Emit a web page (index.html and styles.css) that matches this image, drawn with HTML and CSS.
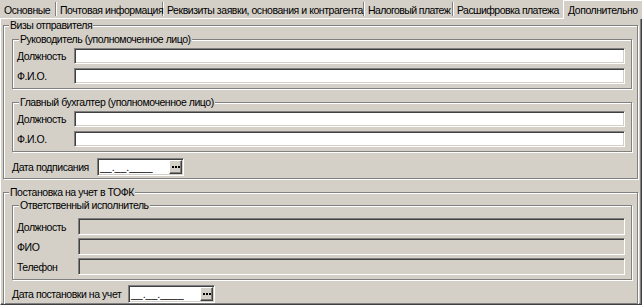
FILE: index.html
```html
<!DOCTYPE html>
<html lang="ru">
<head>
<meta charset="utf-8">
<title>Дополнительно</title>
<link rel="stylesheet" href="styles.css">
</head>
<body>
<div class="window">
  <div class="tabs">
    <div class="tab tab-main">Основные</div>
    <div class="tab tab-mail">Почтовая информация</div>
    <div class="tab tab-req">Реквизиты заявки, основания и контрагента</div>
    <div class="tab tab-tax">Налоговый платеж</div>
    <div class="tab tab-detail">Расшифровка платежа</div>
    <div class="tab tab-active">Дополнительно</div>
  </div>
  <div class="panel">
    <fieldset class="group outer outer-1">
      <legend class="outer-legend">Визы отправителя</legend>
      <fieldset class="group inner inner-1">
        <legend class="inner-legend">Руководитель (уполномоченное лицо)</legend>
        <div class="row"><span class="label">Должность</span><div class="field"></div></div>
        <div class="row"><span class="label">Ф.И.О.</span><div class="field"></div></div>
      </fieldset>
      <fieldset class="group inner inner-2">
        <legend class="inner-legend">Главный бухгалтер (уполномоченное лицо)</legend>
        <div class="row"><span class="label">Должность</span><div class="field"></div></div>
        <div class="row"><span class="label">Ф.И.О.</span><div class="field"></div></div>
      </fieldset>
      <div class="date-row date-row-1">
        <span class="date-label">Дата подписания</span>
        <div class="date-field"><span class="mask">__.__.____</span><span class="dots-btn"><span class="dots"></span></span></div>
      </div>
    </fieldset>
    <fieldset class="group outer outer-2">
      <legend class="outer-legend">Постановка на учет в ТОФК</legend>
      <fieldset class="group inner inner-3">
        <legend class="inner-legend">Ответственный исполнитель</legend>
        <div class="row row-wide"><span class="label">Должность</span><div class="field disabled"></div></div>
        <div class="row row-wide"><span class="label">ФИО</span><div class="field disabled"></div></div>
        <div class="row row-wide"><span class="label">Телефон</span><div class="field disabled"></div></div>
      </fieldset>
      <div class="date-row date-row-2">
        <span class="date-label">Дата постановки на учет</span>
        <div class="date-field"><span class="mask">__.__.____</span><span class="dots-btn"><span class="dots"></span></span></div>
      </div>
    </fieldset>
  </div>
</div>
</body>
</html>
```
FILE: styles.css
```css
* { box-sizing: border-box; }

body {
  margin: 0;
  background: #d4d0c8;
  font-family: "Liberation Sans", Arial, sans-serif;
  font-size: 10.5px;
  letter-spacing: -0.45px;
  color: #000;
}

.window {
  width: 642px;
  height: 305px;
  overflow: hidden;
  display: flex;
  flex-direction: column;
}

/* tabs */
.tabs {
  display: flex;
  height: 19px;
  flex: none;
}

.tab {
  flex: none;
  height: 19px;
  padding: 3px 0 0 3px;
  line-height: 14px;
  white-space: nowrap;
  overflow: hidden;
  border-bottom: 1px solid #fff;
  background:
    linear-gradient(#808080, #808080) right 1px top 2px / 1px 14px no-repeat,
    linear-gradient(#fff, #fff) right 0 top 2px / 1px 14px no-repeat;
}

.tab-main { width: 57px; padding-left: 4px; }
.tab-mail { width: 107px; }
.tab-req { width: 201px; }
.tab-tax { width: 89px; letter-spacing: -0.6px; }
.tab-detail { width: 109px; background: none; letter-spacing: -0.55px; }

.tab-active {
  flex: 1;
  padding: 2px 0 0 4px;
  border-bottom: none;
  border-left: 1px solid #fff;
  border-top: 1px solid #fff;
  background: #d4d0c8;
}

/* panel */
.panel {
  flex: 1;
  min-height: 0;
  overflow: hidden;
  border-left: 1px solid #fff;
  border-right: 1px solid #404040;
  border-bottom: 1px solid #404040;
  box-shadow: inset -1px -1px 0 #808080;
  padding: 0 3px 0 2px;
  display: flex;
  flex-direction: column;
}

/* group boxes */
.group {
  margin: 0;
  min-width: 0;
  border: 1px solid #808080;
  box-shadow: inset 1px 1px 0 #fff, 1px 1px 0 #fff;
}

.group legend {
  padding: 0 1px;
  height: 13px;
  line-height: 13px;
  background: #d4d0c8;
  white-space: nowrap;
}

.outer {
  padding: 1px 5px 2px 8px;
  flex: none;
}

.outer-legend { margin-left: -3px; }

.outer-2 {
  margin-top: 7px;
  padding-top: 0;
  padding-bottom: 10px;
}

.inner {
  padding: 2px 6px 4px 4px;
  display: flex;
  flex-direction: column;
  gap: 4px;
}

.inner-legend { margin-left: 2px; }

.inner-2 { margin-top: 7px; }

.inner-3 {
  padding-top: 6px;
  gap: 3px;
}

/* rows */
.row {
  display: flex;
  align-items: center;
  height: 16px;
}

.row-wide { height: 17px; }

.label {
  width: 57px;
  flex: none;
  white-space: nowrap;
}

.row-wide .label { width: 61px; }

.field {
  flex: 1;
  height: 100%;
  background: #fff;
  border: 1px solid;
  border-color: #808080 #fff #fff #808080;
  box-shadow: inset 1px 1px 0 #404040, inset -1px -1px 0 #d4d0c8;
}

.field.disabled { background: #d4d0c8; }

/* date rows */
.date-row {
  display: flex;
  align-items: center;
  margin-top: 6px;
}

.date-row-2 { margin-top: 5px; }

.date-label {
  width: 85px;
  flex: none;
  white-space: nowrap;
}

.date-row-2 .date-label { width: 116px; }

.date-field {
  width: 87px;
  height: 18px;
  background: #fff;
  border: 1px solid;
  border-color: #808080 #fff #fff #808080;
  box-shadow: inset 1px 1px 0 #404040, inset -1px -1px 0 #d4d0c8;
  padding: 1px;
  display: flex;
  align-items: stretch;
}

.mask {
  flex: 1;
  padding-left: 1px;
  line-height: 14px;
  letter-spacing: 0;
  color: #000;
  white-space: nowrap;
  overflow: hidden;
}

.dots-btn {
  width: 13px;
  flex: none;
  background: #d4d0c8;
  border: 1px solid;
  border-color: #fff #404040 #404040 #fff;
  box-shadow: inset -1px -1px 0 #808080;
  display: flex;
  align-items: center;
  justify-content: center;
}

.dots {
  width: 2px;
  height: 2px;
  background: #000;
  box-shadow: -3px 0 0 #000, 3px 0 0 #000;
}
```
